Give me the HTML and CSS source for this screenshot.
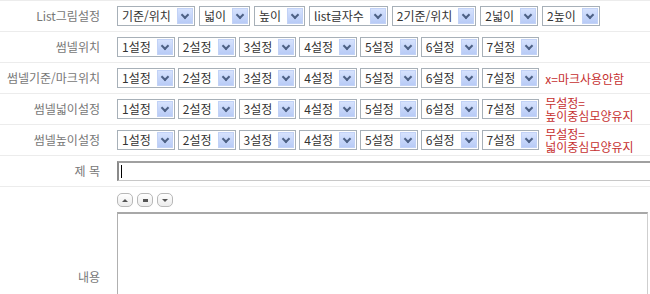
FILE: index.html
```html
<!DOCTYPE html>
<html lang="ko">
<head>
  <meta charset="UTF-8">
  <title>썸넬 설정</title>
  <link rel="stylesheet" href="styles.css">
</head>
<body>
  <div class="form">
    <div class="row">
      <div class="label">List그림설정</div>
      <div class="field wide">
        <span class="sel">기준/위치<i class="arr"></i></span>
        <span class="sel">넓이<i class="arr"></i></span>
        <span class="sel">높이<i class="arr"></i></span>
        <span class="sel">list글자수<i class="arr"></i></span>
        <span class="sel">2기준/위치<i class="arr"></i></span>
        <span class="sel">2넓이<i class="arr"></i></span>
        <span class="sel">2높이<i class="arr"></i></span>
      </div>
    </div>

    <div class="row">
      <div class="label">썸넬위치</div>
      <div class="field">
        <span class="sel">1설정<i class="arr"></i></span>
        <span class="sel">2설정<i class="arr"></i></span>
        <span class="sel">3설정<i class="arr"></i></span>
        <span class="sel">4설정<i class="arr"></i></span>
        <span class="sel">5설정<i class="arr"></i></span>
        <span class="sel">6설정<i class="arr"></i></span>
        <span class="sel">7설정<i class="arr"></i></span>
      </div>
    </div>

    <div class="row">
      <div class="label">썸넬기준/마크위치</div>
      <div class="field">
        <span class="sel">1설정<i class="arr"></i></span>
        <span class="sel">2설정<i class="arr"></i></span>
        <span class="sel">3설정<i class="arr"></i></span>
        <span class="sel">4설정<i class="arr"></i></span>
        <span class="sel">5설정<i class="arr"></i></span>
        <span class="sel">6설정<i class="arr"></i></span>
        <span class="sel">7설정<i class="arr"></i></span>
        <span class="note">x=마크사용안함</span>
      </div>
    </div>

    <div class="row">
      <div class="label">썸넬넓이설정</div>
      <div class="field">
        <span class="sel">1설정<i class="arr"></i></span>
        <span class="sel">2설정<i class="arr"></i></span>
        <span class="sel">3설정<i class="arr"></i></span>
        <span class="sel">4설정<i class="arr"></i></span>
        <span class="sel">5설정<i class="arr"></i></span>
        <span class="sel">6설정<i class="arr"></i></span>
        <span class="sel">7설정<i class="arr"></i></span>
        <span class="note">무설정=<br>높이중심모양유지</span>
      </div>
    </div>

    <div class="row">
      <div class="label">썸넬높이설정</div>
      <div class="field">
        <span class="sel">1설정<i class="arr"></i></span>
        <span class="sel">2설정<i class="arr"></i></span>
        <span class="sel">3설정<i class="arr"></i></span>
        <span class="sel">4설정<i class="arr"></i></span>
        <span class="sel">5설정<i class="arr"></i></span>
        <span class="sel">6설정<i class="arr"></i></span>
        <span class="sel">7설정<i class="arr"></i></span>
        <span class="note">무설정=<br>넓이중심모양유지</span>
      </div>
    </div>

    <div class="row">
      <div class="label">제 목</div>
      <div class="field">
        <div class="text-input"><span class="caret"></span></div>
      </div>
    </div>

    <div class="row content-row">
      <div class="label">내용</div>
      <div class="field editor">
        <div class="tools">
          <span class="tool"><i class="up"></i></span>
          <span class="tool"><i class="mid"></i></span>
          <span class="tool"><i class="down"></i></span>
        </div>
        <div class="textarea"></div>
      </div>
    </div>
  </div>
</body>
</html>
```

FILE: styles.css
```css
html, body {
  margin: 0;
  padding: 0;
  overflow: hidden;
  background: #fff;
}

body {
  font-family: "Noto Sans CJK KR", "Liberation Sans", sans-serif;
  font-size: 12px;
  color: #333;
}

.form {
  width: 100%;
  border-top: 1px solid #ececec;
}

.row {
  display: flex;
  align-items: center;
  height: 30px;
  border-bottom: 1px solid #ececec;
}

.label {
  width: 100px;
  flex-shrink: 0;
  display: flex;
  justify-content: flex-end;
  white-space: nowrap;
  color: #777;
  line-height: 14px;
  margin-right: 17px;
}

.field {
  display: flex;
  align-items: center;
  gap: 3px;
  white-space: nowrap;
}

.field.wide {
  gap: 4px;
}

/* old style select box */
.sel {
  display: inline-flex;
  align-items: center;
  height: 20px;
  box-sizing: border-box;
  border: 1px solid #a7b0b8;
  padding-left: 4px;
  padding-right: 1px;
  background: #fff;
  line-height: 14px;
  color: #333;
}

.arr {
  display: flex;
  align-items: center;
  justify-content: center;
  width: 16px;
  height: 16px;
  margin-left: 6px;
  box-sizing: border-box;
  border: 1px solid #c2d2f6;
  background: linear-gradient(#d6e2fd, #b8cbf6);
}

.arr::after {
  content: "";
  width: 4px;
  height: 4px;
  margin-top: -3px;
  border-right: 2px solid #4d6185;
  border-bottom: 2px solid #4d6185;
  transform: rotate(45deg);
}

.note {
  margin-left: 3px;
  color: #c62f2f;
  line-height: 13px;
  font-size: 12px;
}

.text-input {
  display: flex;
  align-items: center;
  width: 560px;
  height: 20px;
  box-sizing: border-box;
  border: 1px solid #c8c8c8;
  border-top: 2px solid #a0a0a0;
  border-left: 2px solid #8a8a8a;
  padding-left: 2px;
}

.caret {
  width: 1px;
  height: 13px;
  background: #000;
}

.content-row {
  height: 180px;
  align-items: center;
}

.editor {
  flex-direction: column;
  align-items: flex-start;
  gap: 5px;
  align-self: flex-start;
  padding-top: 6px;
}

.tools {
  display: flex;
  gap: 4px;
}

.tool {
  display: flex;
  align-items: center;
  justify-content: center;
  width: 16px;
  height: 14px;
  box-sizing: border-box;
  border: 1px solid #b8b8b8;
  border-radius: 5px;
  background: linear-gradient(#fff, #ececec);
}

.tool .up {
  border-left: 3px solid transparent;
  border-right: 3px solid transparent;
  border-bottom: 3px solid #555;
}

.tool .down {
  border-left: 3px solid transparent;
  border-right: 3px solid transparent;
  border-top: 3px solid #555;
}

.tool .mid {
  width: 5px;
  height: 3px;
  background: #555;
}

.textarea {
  width: 531px;
  height: 150px;
  box-sizing: border-box;
  border: 1px solid #cfcfcf;
  border-top: 2px solid #a8a8a8;
  border-left: 1px solid #b0b0b0;
  background: #fff;
}
```
